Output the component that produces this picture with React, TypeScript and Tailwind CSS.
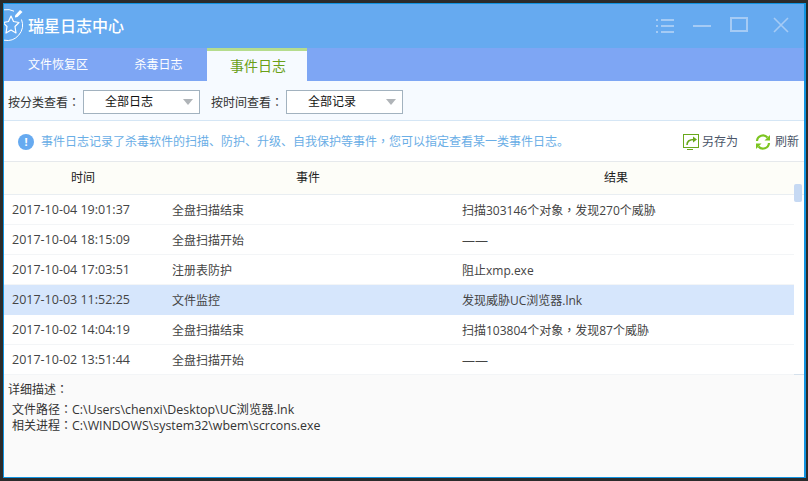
const font = "[font-family:'Open_Sans','Noto_Sans_CJK_SC',sans-serif]";

// the reference centres full-width punctuation, the TC cut of the font does too
function Punct({ children }: { children: string }) {
  return <span className="[font-family:'Noto_Sans_CJK_TC',sans-serif]">{children}</span>;
}

const rows = [
  {
    time: "2017-10-04 19:01:37",
    event: "全盘扫描结束",
    result: (
      <>
        扫描303146个对象<Punct>，</Punct>发现270个威胁
      </>
    ),
  },
  { time: "2017-10-04 18:15:09", event: "全盘扫描开始", result: <span className="text-[13px]">——</span> },
  { time: "2017-10-04 17:03:51", event: "注册表防护", result: "阻止xmp.exe" },
  { time: "2017-10-03 11:52:25", event: "文件监控", result: "发现威胁UC浏览器.lnk", selected: true },
  {
    time: "2017-10-02 14:04:19",
    event: "全盘扫描结束",
    result: (
      <>
        扫描103804个对象<Punct>，</Punct>发现87个威胁
      </>
    ),
  },
  { time: "2017-10-02 13:51:44", event: "全盘扫描开始", result: <span className="text-[13px]">——</span> },
];

function Logo() {
  return (
    <svg width="22" height="44" viewBox="4 4 22 44" fill="none" stroke="#fff" strokeWidth="1" className="shrink-0">
      <path d="M4 9.8 A15.5 15.5 0 0 1 14 11.2" />
      <path d="M21.5 19.5 A15.5 15.5 0 0 1 4 40.2" />
      <path
        d="M11 16 L13.5 21.5 L19 22.5 L15 26.5 L16 33 L11 30 L6 33 L7 26.5 L3 22.5 L8.5 21.5 Z"
        strokeWidth="1.2"
        strokeLinejoin="round"
      />
      <path d="M15 15.5 L20 10 L22.5 12 L17.5 17 L15 17.5 Z" fill="#fff" stroke="none" />
    </svg>
  );
}

function WindowButtons() {
  return (
    <div className="ml-auto flex items-center text-[#a5cbf5]">
      <svg width="18" height="14" viewBox="0 0 18 14" fill="currentColor" className="mr-[19px]">
        <rect x="0" y="0" width="2" height="2" />
        <rect x="5" y="0" width="13" height="2" />
        <rect x="0" y="6" width="2" height="2" />
        <rect x="5" y="6" width="13" height="2" />
        <rect x="0" y="12" width="2" height="2" />
        <rect x="5" y="12" width="13" height="2" />
      </svg>
      <div className="mr-[19px] h-[2px] w-[18px] bg-[#a5cbf5]" />
      <div className="mb-[3px] mr-[25px] h-[15px] w-[18px] border-2 border-[#a5cbf5]" />
      <svg width="16" height="16" viewBox="0 0 16 16" stroke="currentColor" strokeWidth="1.6" className="mb-[2px] mr-[15px]">
        <path d="M1 1 L15 15 M15 1 L1 15" />
      </svg>
    </div>
  );
}

function Select({ label }: { label: string }) {
  return (
    <div className="relative flex h-[24px] w-[117px] items-center border border-[#a2b2bf] bg-white pl-[21px] text-[#111]">
      {label}
      <div className="absolute right-[6px] top-[8px] h-0 w-0 border-x-[5px] border-t-[6px] border-x-transparent border-t-[#b0b4b8]" />
    </div>
  );
}

export default function App() {
  return (
    <div className={`${font} h-[481px] w-[808px] overflow-hidden bg-[#2b2b2b] p-[3px] text-[12px] leading-none`}>
      <div className="flex h-[475px] w-[803px] flex-col border border-r-2 border-[#1193e0] bg-[#fafafa]">
        {/* title bar */}
        <div className="flex h-[44px] shrink-0 items-center overflow-hidden bg-[#66aaf0]">
          <Logo />
          <span className="ml-[2px] text-[16px] font-medium text-white">瑞星日志中心</span>
          <WindowButtons />
        </div>

        {/* tabs */}
        <div className="flex h-[33px] shrink-0 bg-[#7ea6f4] text-white">
          <div className="flex w-[108px] items-center justify-center">文件恢复区</div>
          <div className="flex w-[95px] items-center justify-center pr-[2px]">杀毒日志</div>
          <div className="flex w-[100px] items-center justify-center border-t-[3px] border-[#b5dc8e] bg-[#f6faff] pl-[2px] text-[14px] text-[#6aa018]">
            事件日志
          </div>
        </div>

        {/* filters */}
        <div className="flex h-[40px] shrink-0 items-center border-b border-[#d5e6f5] bg-[#f6faff] pl-[4px] pt-[3px] text-[#333]">
          <span className="w-[75px]">
            按分类查看<Punct>：</Punct>
          </span>
          <Select label="全部日志" />
          <span className="ml-[11px] w-[75px]">
            按时间查看<Punct>：</Punct>
          </span>
          <Select label="全部记录" />
        </div>

        {/* info bar */}
        <div className="flex h-[41px] shrink-0 items-center border-b border-[#e6e9ec] bg-white pl-[14px] pt-[1px]">
          <div className="flex h-[16px] w-[16px] items-center justify-center rounded-full bg-[#66aaf0] text-[11px] font-bold text-white">
            !
          </div>
          <span className="ml-[7px] text-[#6aaee6]">
            事件日志记录了杀毒软件的扫描、防护、升级、自我保护等事件<Punct>，</Punct>您可以指定查看某一类事件日志。
          </span>
          <div className="ml-auto flex items-center text-[#4a5568]">
            <svg width="16" height="16" viewBox="0 0 16 16" fill="none" stroke="#69a81c" className="mr-[3px]">
              <rect x="0.5" y="0.5" width="15" height="13" />
              <path d="M4 11 C4 7 7 5.5 11 5.5" strokeWidth="1.6" />
              <path d="M10 2.5 L14 5.5 L10 8.5 Z" fill="#69a81c" stroke="none" />
              <path d="M4 15.5 H10" />
            </svg>
            <span className="mr-[17px]">另存为</span>
            <svg width="16" height="16" viewBox="0 0 16 16" fill="none" stroke="#7cc521" strokeWidth="2.2" className="mr-[4px]">
              <path d="M2 7 A 6 6 0 0 1 12.5 3.5" />
              <path d="M14 9 A 6 6 0 0 1 3.5 12.5" />
              <path d="M15 1 V6.5 H9.5 Z" fill="#7cc521" stroke="none" />
              <path d="M1 15 V9.5 H6.5 Z" fill="#7cc521" stroke="none" />
            </svg>
            <span className="mr-[5px]">刷新</span>
          </div>
        </div>

        {/* table header */}
        <div className="flex h-[33px] shrink-0 items-center border-b border-[#e9eef2] bg-[#fdfdf8] text-[#222]">
          <span className="ml-[67px] w-[225px]">时间</span>
          <span className="w-[308px]">事件</span>
          <span>结果</span>
        </div>

        {/* table body */}
        <div className="relative flex h-[179px] shrink-0 flex-col bg-white pr-[10px] text-[#444]">
          {rows.map((row) => (
            <div
              key={row.time}
              className={`flex h-[30px] shrink-0 items-center border-b pt-[2px] ${
                row.selected ? "border-[#d6e6fc] bg-[#d6e6fc]" : "border-[#f3f5f7]"
              }`}
            >
              <span className="ml-[8px] w-[160px] text-[12.5px]">{row.time}</span>
              <span className="w-[290px]">{row.event}</span>
              <span>{row.result}</span>
            </div>
          ))}
          <div className="absolute right-[2px] top-[-11px] h-[18px] w-[8px] rounded-[2px] bg-[#c6d9f3]" />
        </div>

        {/* detail */}
        <div className="flex-1 border-t border-[#d5e1ec] bg-[#fafafa] pl-[4px] pt-[8px] text-[#333]">
          <div>
            详细描述<Punct>：</Punct>
          </div>
          <div className="mt-[5px] pl-[4px] leading-[16px]">
            <div className="h-[16px]">
              文件路径<Punct>：</Punct>
              <span className="text-[12.4px]">C:\Users\chenxi\Desktop\UC浏览器.lnk</span>
            </div>
            <div className="h-[16px]">
              相关进程<Punct>：</Punct>
              <span className="text-[12.4px]">C:\WINDOWS\system32\wbem\scrcons.exe</span>
            </div>
          </div>
        </div>
      </div>
    </div>
  );
}
